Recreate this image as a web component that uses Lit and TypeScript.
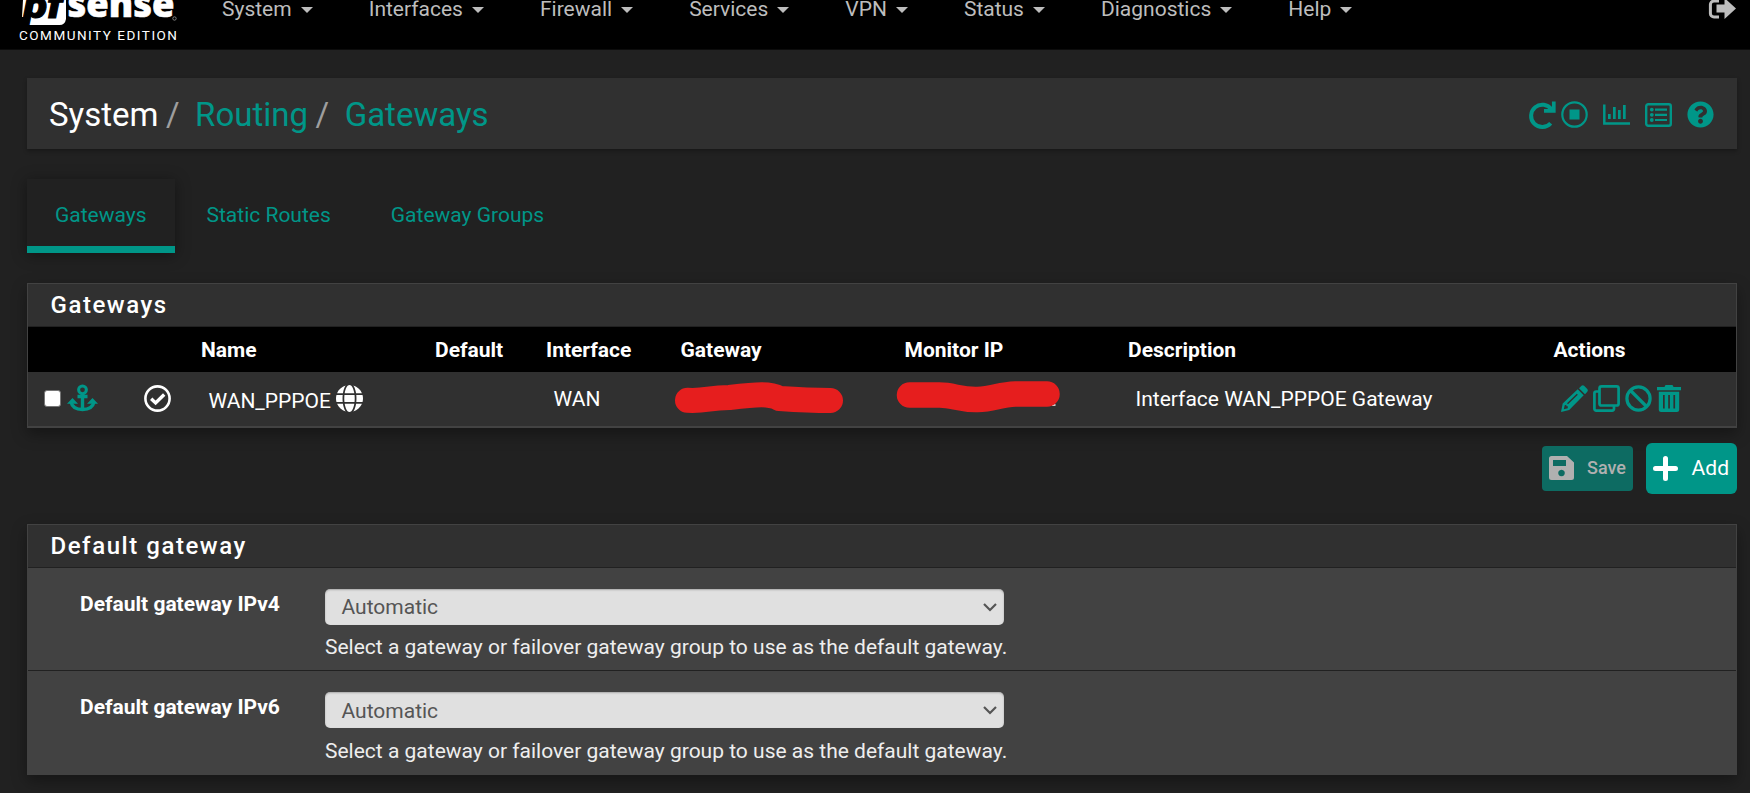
import { LitElement, html, css, svg } from "lit";
import { customElement } from "lit/decorators.js";

const icon = (w: number, h: number, body: unknown, vb?: string) =>
  html`<svg width=${w} height=${h} viewBox=${vb ?? `0 0 ${w} ${h}`} fill="currentColor">${body}</svg>`;

const I = {
  signOut: icon(27, 27, svg`<path d="M11 7H6a3.6 3.6 0 0 0-3.6 3.6v8.8A3.6 3.6 0 0 0 6 23h5" transform="translate(-1 0)" fill="none" stroke="currentColor" stroke-width="3"/><path d="M7.500 10.500h8V4L27 14.500 15.500 25V18.500h-8z"/>`),
  redo: icon(27, 27, svg`<path d="M21.700 22.300A11.200 11.200 0 1 1 22.500 8.500" fill="none" stroke="currentColor" stroke-width="4"/><path d="M24.800 0.500V9.900H15" fill="none" stroke="currentColor" stroke-width="3.700"/>`),
  stop: icon(27, 27, svg`<circle cx="13.500" cy="13.500" r="12.200" fill="none" stroke="currentColor" stroke-width="2.200"/><rect x="8.500" y="8.500" width="10" height="10"/>`),
  chart: icon(27, 21, svg`<path d="M1.300 0.500V19.500H27" fill="none" stroke="currentColor" stroke-width="2.500"/><path d="M5 10h2.700v5H5zM10 3h2.700v12H10zM15 6h2.700v9H15zM20 1h2.700v14H20z"/>`),
  list: icon(27, 24, svg`<rect x="1.200" y="1.200" width="24.600" height="21.600" rx="2" fill="none" stroke="currentColor" stroke-width="2.400"/><path d="M10 5.500h12v2.200H10zM10 10.700h12v2.200H10zM10 15.900h12v2.200H10z"/><circle cx="6.800" cy="6.600" r="1.900"/><circle cx="6.800" cy="11.800" r="1.900"/><circle cx="6.800" cy="17" r="1.900"/>`),
  help: icon(27, 27, svg`<path d="M504 256c0 136.997-111.043 248-248 248S8 392.997 8 256C8 119.083 119.043 8 256 8s248 111.083 248 248zM262.655 90c-54.497 0-89.255 22.957-116.549 63.758-3.536 5.286-2.353 12.415 2.715 16.258l34.699 26.310c5.205 3.947 12.621 3.008 16.665-2.122 17.864-22.658 30.113-35.797 57.303-35.797 20.429 0 45.698 13.148 45.698 32.958 0 14.976-12.363 22.667-32.534 33.976C247.128 238.528 216 254.941 216 296v4c0 6.627 5.373 12 12 12h56c6.627 0 12-5.373 12-12v-1.333c0-28.462 83.186-29.647 83.186-106.667 0-58.002-60.165-102-116.531-102zM256 338c-25.365 0-46 20.635-46 46 0 25.364 20.635 46 46 46s46-20.636 46-46c0-25.365-20.635-46-46-46z"/>`, "0 0 512 512"),
  anchor: icon(31, 28, svg`<circle cx="15.500" cy="5.800" r="3.900" fill="none" stroke="currentColor" stroke-width="3"/><path d="M15.500 9v16M10.500 12.500h10M4 18c1 5 5.500 7.500 11.500 7.500S26 23 27 18" fill="none" stroke="currentColor" stroke-width="3.400"/><path d="M5.500 14L11 19.800H0zM25.500 14L31 19.800H20z"/>`),
  check: icon(27, 27, svg`<circle cx="13.500" cy="13.500" r="12.100" fill="none" stroke="currentColor" stroke-width="2.600"/><path d="M7.200 13.800l4.400 4.200 8.600-8.500" fill="none" stroke="currentColor" stroke-width="3.400"/>`),
  globe: icon(27, 27, svg`<path d="M336.500 160C322 70.700 287.800 8 248 8s-74 62.700-88.500 152h177zM152 256c0 22.200 1.200 43.500 3.300 64h185.300c2.100-20.500 3.300-41.800 3.300-64s-1.200-43.500-3.300-64H155.300c-2.100 20.500-3.300 41.800-3.300 64zm324.700-96c-28.600-67.900-86.500-120.400-158-141.600 24.400 33.800 41.200 84.700 50 141.600h108zM177.200 18.400C105.800 39.600 47.800 92.100 19.300 160h108c8.700-56.900 25.500-107.800 49.900-141.600zM487.400 192H372.700c2.100 21 3.300 42.500 3.300 64s-1.200 43-3.300 64h114.600c5.500-20.500 8.600-41.800 8.600-64s-3.100-43.500-8.500-64zM120 256c0-21.500 1.200-43 3.300-64H8.600C3.200 212.500 0 233.800 0 256s3.200 43.500 8.600 64h114.600c-2-21-3.200-42.500-3.200-64zm39.500 96c14.500 89.300 48.700 152 88.500 152s74-62.700 88.500-152h-177zm159.300 141.600c71.400-21.200 129.400-73.700 158-141.600h-108c-8.800 56.900-25.600 107.800-50 141.600zM19.300 352c28.600 67.900 86.500 120.400 158 141.600-24.400-33.800-41.200-84.700-50-141.600h-108z"/>`, "0 8 496 496"),
  pencil: icon(27, 27, svg`<path fill-rule="evenodd" d="M16.700 4.300l6 6L8.200 25 0 27l1.700-8.500zM3.700 20.300l-.9 4 4-1V21.200H5.400v-1.400zM15.800 8.700L6 18.300l1 1L16.800 9.700z"/><path d="M18 3.200L20.500 .8q1.300-1.200 2.600 0L26.300 4q1.200 1.400 0 2.700L24 9.200z"/>`),
  clone: icon(27, 27, svg`<rect x="6.500" y="1.400" width="19.100" height="19.100" rx="2" fill="none" stroke="currentColor" stroke-width="2.700"/><path d="M6 6.500H3.200a1.800 1.800 0 0 0-1.800 1.800V23.800a1.800 1.800 0 0 0 1.800 1.800h16a1.800 1.800 0 0 0 1.800-1.800v-3" fill="none" stroke="currentColor" stroke-width="2.700"/>`),
  ban: icon(27, 27, svg`<circle cx="13.500" cy="13.500" r="11.600" fill="none" stroke="currentColor" stroke-width="3.200"/><path d="M5.500 5.500l16 16" stroke="currentColor" stroke-width="3.200"/>`),
  trash: icon(24, 27, svg`<path d="M0 2h7.500L8.500 0h7l1 2H24v3.200H0z"/><path fill-rule="evenodd" d="M1.800 6.700h20.400V25a2.200 2.200 0 0 1-2.200 2H4a2.200 2.200 0 0 1-2.200-2zM6 10v13.500h1.700V10zm5.200 0v13.500h1.700V10zm5.200 0v13.500h1.700V10z"/>`),
  save: icon(25, 24, svg`<path fill-rule="evenodd" d="M2.500 0H18l7 6.500V21.500a2.500 2.500 0 0 1-2.500 2.500h-20A2.500 2.500 0 0 1 0 21.500v-19A2.500 2.500 0 0 1 2.500 0zM4 4v6h13V4zM12.500 13.700a3.300 3.300 0 1 0 .01 0z"/>`),
  plus: icon(25, 25, svg`<path d="M12.500 2.500v20M2.500 12.500h20" stroke="currentColor" stroke-width="5" stroke-linecap="round"/>`),
  chevron: icon(14, 9, svg`<path d="M1 1l6 6 6-6" fill="none" stroke="currentColor" stroke-width="2.200"/>`),
};

const MENU = ["System", "Interfaces", "Firewall", "Services", "VPN", "Status", "Diagnostics", "Help"];
const COLS = ["", "Name", "Default", "Interface", "Gateway", "Monitor IP", "Description", "Actions"];

@customElement("app-root")
export class AppRoot extends LitElement {
  static styles = css`
    :host { display: block; height: 793px; overflow: hidden; background: #212121; color: #fff; font: 21px/30px Roboto, "Liberation Sans", sans-serif; }
    * { box-sizing: border-box; }
    svg { display: block; flex: none; overflow: visible; }
    .bar { height: 50px; background: #000; border-bottom: 1px solid #0c0c0c; display: flex; align-items: flex-start; color: #bdbdbd; overflow: hidden; }
    .brand { width: 222px; height: 50px; flex: none; color: #fff; padding-left: 19px; }
    .nav { display: flex; gap: 56px; margin-top: -6px; flex: 1; }
    .nav span { display: flex; align-items: center; gap: 9px; white-space: nowrap; }
    .nav span::after { content: ""; border: 6px solid transparent; border-top-color: currentColor; border-bottom: 0; margin-top: 2px; }
    .out { margin: -6px 14px 0 0; }
    .main { padding: 28px 13px 0 27px; }
    .crumbs { height: 71px; background: #303030; box-shadow: 0 2px 4px rgba(0,0,0,.3); display: flex; align-items: center; padding: 2px 23px 0 22px; font-size: 33px; line-height: 40px; white-space: pre; }
    .teal, .tools, .tabs, .acts { color: #009688; }
    .slash { color: #9e9e9e; padding: 0 15.500px 0 7.500px; }
    .tools { margin-left: auto; display: flex; align-items: center; }
    .tools svg { margin-left: 15px; }
    .tools svg:nth-child(1), .tools svg:nth-child(2) { margin-left: 5px; }
    .tabs { display: flex; margin-top: 30px; height: 74px; }
    .tab { padding: 21px 30px 0 30px; height: 74px; }
    .on { width: 148px; padding: 21px 0 0 28px; margin-right: 1.500px; border-bottom: 7px solid #009688; box-shadow: 0 2px 14px rgba(0,0,0,.4); }
    .panel { border: 1px solid #424242; background: #303030; box-shadow: 0 6px 14px rgba(0,0,0,.35); }
    .head { height: 43px; padding: 6px 22px 0 22.500px; font-size: 24px; font-weight: 500; letter-spacing: 1.550px; border-bottom: 1px solid #212121; }
    .list { margin-top: 30px; border-bottom-width: 2px; height: 145px; }
    .row { display: grid; grid-template-columns: 173px 234px 111px 134.500px 224px 223.500px 425.500px 1fr; align-items: center; }
    .th { height: 45px; background: #000; font-weight: 700; }
    .td { height: 54px; }
    .td > * { padding-left: 7.500px; display: flex; align-items: center; }
    .td > .first { padding-left: 16px; }
    .td svg { margin-bottom: 2px; }
    .td > .scrub svg { margin: 0 0 0 -1px; }
    .box { width: 17px; height: 17px; background: #fff; border: 1px solid #767676; border-radius: 3px; margin: 0 6px 2px 0; }
    .anchor { color: #009688; margin-right: 46px; display: flex; }
    .name { gap: 5px; }
    .name span { padding-top: 3px; }
    .td > .acts { gap: 5px; }
    .td > .scrub { padding: 0; }
    .btns { display: flex; justify-content: flex-end; align-items: center; gap: 13px; margin-top: 15px; height: 51px; }
    .btn { width: 91px; height: 51px; border-radius: 6px; background: #009688; display: flex; align-items: center; justify-content: space-between; padding: 0 8px 0 7px; }
    .btn span { padding-bottom: 2px; }
    .dim { height: 45px; border-radius: 4px; background: #0d6b62; color: #b0b0b0; font-size: 18px; font-weight: 500; padding-right: 7px; }
    .dim svg { margin-bottom: 2px; }
    .form { margin-top: 30px; border-bottom: 0; }
    .field { height: 102px; background: #424242; padding: 21px 0 0 297px; display: grid; grid-template-columns: 679px; grid-template-rows: 36px 30px; row-gap: 7px; }
    .field + .field { border-top: 1px solid #212121; height: 105px; row-gap: 8px; }
    .field + .field .sel span { padding-top: 1px; }
    .lab { font-weight: 700; grid-row: 1; grid-column: 1; margin-left: -245px; width: 230px; }
    .sel { grid-row: 1; grid-column: 1; height: 36px; border-radius: 5px; background: #e0e0e0; color: #555; display: flex; align-items: center; justify-content: space-between; padding: 0 7px 0 16.500px; box-shadow: inset 0 1px 2px rgba(0,0,0,.25); }
    .hint { grid-row: 2; white-space: nowrap; color: #eee; }
    .word { font: 800 37px "Open Sans", sans-serif; }
    .pf { font: italic 900 36px Roboto, sans-serif; }
    .ed { font: 400 13.500px Roboto, sans-serif; }
  `;

  field(v: string) {
    return html`<div class="field"><div class="lab">Default gateway ${v}</div>
      <div class="sel"><span>Automatic</span>${I.chevron}</div>
      <div class="hint">Select a gateway or failover gateway group to use as the default gateway.</div></div>`;
  }

  render() {
    return html`
      <header class="bar">
        <div class="brand"><svg width="170" height="50" viewBox="19 0 170 50">
          <path d="M23 0H66V19Q65 25 59.500 25H26.500L28 17H22z" fill="#fff"/>
          <text class="pf" x="23.500" y="17.500" fill="#000" stroke="#000" textLength="39" lengthAdjust="spacingAndGlyphs">pf</text>
          <text class="word" x="67.500" y="17" fill="#fff" stroke="#fff" stroke-width=".6" textLength="107" lengthAdjust="spacingAndGlyphs">sense</text>
          <circle cx="174.500" cy="18.500" r="1.700" fill="none" stroke="#999" stroke-width=".8"/>
          <text class="ed" x="19" y="40" fill="#fff" textLength="158">COMMUNITY EDITION</text>
        </svg></div>
        <nav class="nav">${MENU.map((m) => html`<span>${m}</span>`)}</nav>
        <div class="out">${I.signOut}</div>
      </header>
      <main class="main">
        <div class="crumbs"><span>System</span><span class="slash">/</span><span class="teal">Routing</span><span class="slash">/</span><span class="teal">Gateways</span>
          <div class="tools">${I.redo}${I.stop}${I.chart}${I.list}${I.help}</div></div>
        <div class="tabs"><div class="tab on">Gateways</div><div class="tab">Static Routes</div><div class="tab">Gateway Groups</div></div>
        <section class="panel list">
          <div class="head">Gateways</div>
          <div class="row th">${COLS.map((c) => html`<span>${c}</span>`)}</div>
          <div class="row td">
            <div class="first"><span class="box"></span><span class="anchor">${I.anchor}</span>${I.check}</div>
            <div class="name"><span>WAN_PPPOE</span>${I.globe}</div><div></div><div>WAN</div>
            <div class="scrub"><svg width="180" height="54" viewBox="680 372 180 54"><path d="M687.500 400.300c20 1 20-2.800 42-2.800 30-3.500 40-4 50 1 22 1.500 30 2 51 2" fill="none" stroke="#e61e1e" stroke-width="25" stroke-linecap="round"/></svg></div>
            <div class="scrub"><svg width="180" height="54" viewBox="904 372 180 54"><path d="M1052 405h3.500" stroke="#fff" stroke-width="1.500"/><path d="M909.500 395h30c14 0 20 5 38 4.500 16-.5 22-5 38-5.500h31.500" fill="none" stroke="#e61e1e" stroke-width="25.500" stroke-linecap="round"/></svg></div>
            <div>Interface WAN_PPPOE Gateway</div>
            <div class="acts">${I.pencil}${I.clone}${I.ban}${I.trash}</div>
          </div>
        </section>
        <div class="btns"><div class="btn dim">${I.save}<span>Save</span></div><div class="btn">${I.plus}<span>Add</span></div></div>
        <section class="panel form"><div class="head">Default gateway</div>${this.field("IPv4")}${this.field("IPv6")}</section>
      </main>`;
  }
}
